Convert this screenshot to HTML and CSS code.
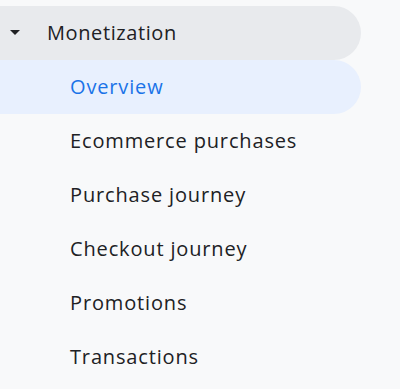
FILE: index.html
```html
<!DOCTYPE html>
<html>
<head>
    <meta charset="UTF-8">
    <meta name="viewport" content="width=device-width, initial-scale=1.0">
    <title>Monetization</title>
    <link rel="stylesheet" href="styles.css">
</head>
<body>
    <nav class="side-nav">
        <div class="nav-group">
            <div class="nav-header">
                <svg class="caret" width="10" height="5" viewBox="0 0 10 5">
                    <path d="M0 0 L10 0 L5 5 Z" fill="#202124"/>
                </svg>
                <span>Monetization</span>
            </div>
            <a class="nav-item active">Overview</a>
            <a class="nav-item">Ecommerce purchases</a>
            <a class="nav-item">Purchase journey</a>
            <a class="nav-item">Checkout journey</a>
            <a class="nav-item">Promotions</a>
            <a class="nav-item">Transactions</a>
        </div>
    </nav>
</body>
</html>
```

FILE: styles.css
```css
body {
    margin: 0;
    background: #f8f9fa;
    font-family: "Open Sans", Roboto, sans-serif;
    color: #202124;
}

.side-nav {
    width: 361px;
    padding-top: 6px;
}

.nav-group {
    display: flex;
    flex-direction: column;
}

.nav-header {
    height: 54px;
    box-sizing: border-box;
    padding-bottom: 2px;
    display: flex;
    align-items: center;
    background: #e8eaed;
    border-radius: 0 27px 27px 0;
    font-size: 20px;
    font-weight: 500;
    letter-spacing: 0.6px;
}

.caret {
    margin-left: 10px;
    margin-right: 27px;
}

.nav-item {
    height: 54px;
    box-sizing: border-box;
    padding: 0 0 2px 70px;
    display: flex;
    align-items: center;
    font-size: 20px;
    letter-spacing: 0.85px;
    border-radius: 0 27px 27px 0;
    cursor: pointer;
}

.nav-item.active {
    background: #e8f0fe;
    color: #1a73e8;
}
```
